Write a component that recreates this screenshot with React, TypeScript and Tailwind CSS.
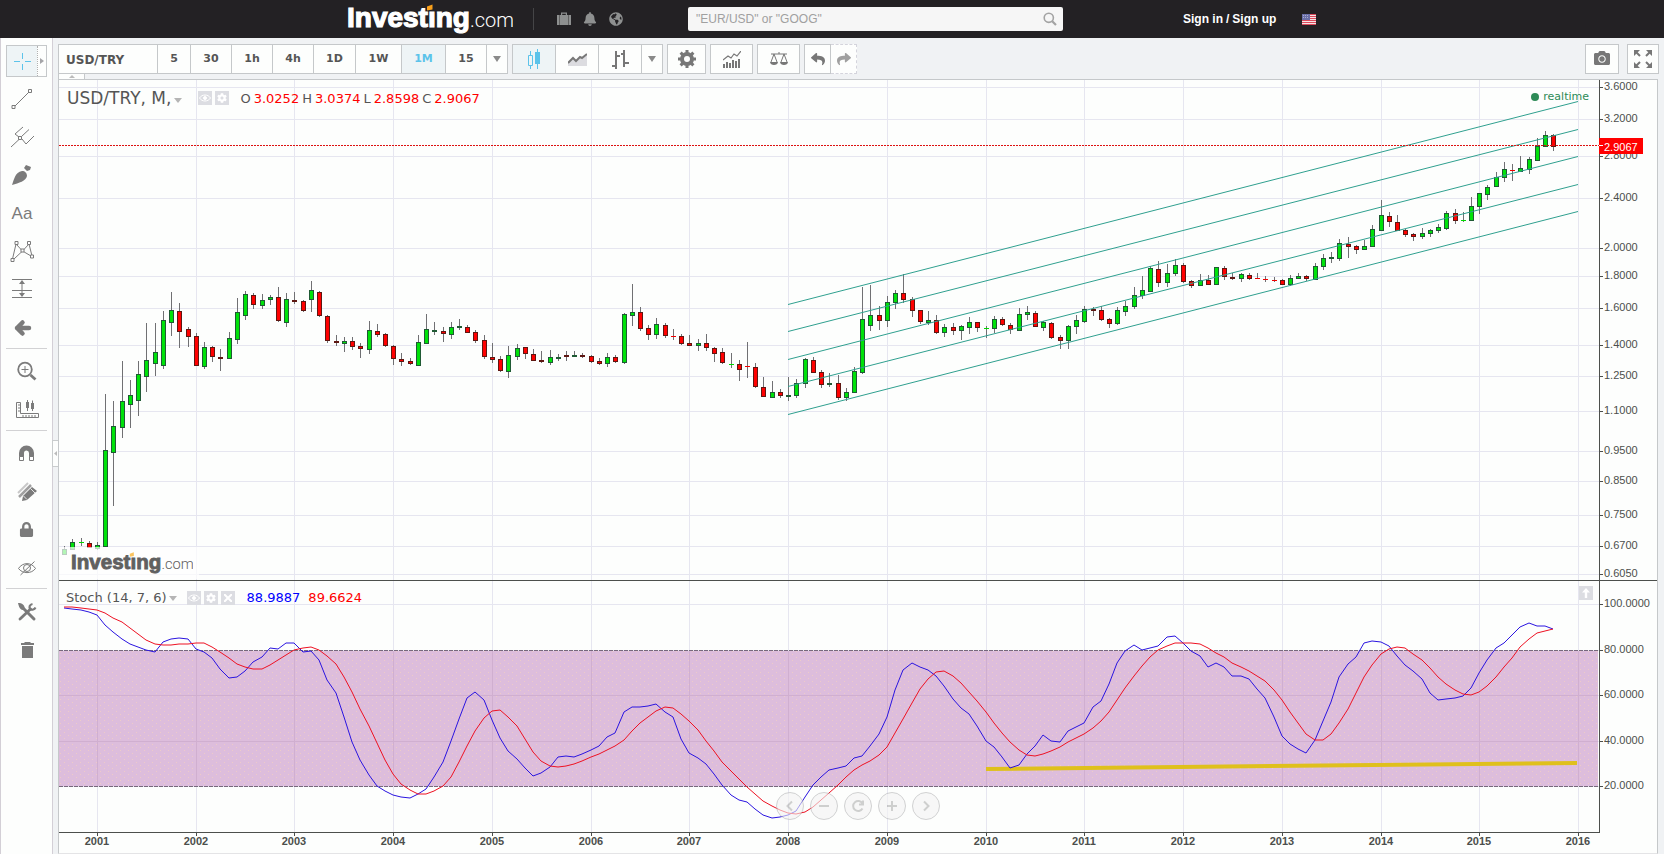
import React from 'react';
import { FaBell, FaGlobeAmericas, FaReply, FaShare, FaCamera, FaCog, FaLock } from 'react-icons/fa';
import clsx from 'clsx';

type Candle = [dir: 'g' | 'r', high: number, top: number, bottom: number, low: number];

// monthly candles, Sep 2000 - Oct 2015, in chart units
const candles: Candle[] = [
  ['g', 466, 469, 475, 475], ['g', 459, 462, 470, 470], ['g', 458, 462, 463, 466], ['r', 461, 463, 468, 468],
  // 2001
  ['g', 462, 465, 469, 470], ['g', 314, 370, 467, 467], ['g', 321, 346, 373, 426], ['g', 281, 321, 348, 358],
  ['g', 300, 315, 325, 348], ['g', 281, 294, 321, 336], ['g', 243, 280, 297, 312], ['g', 243, 272, 284, 296],
  ['g', 231, 240, 286, 289], ['g', 212, 230, 243, 256], ['r', 223, 231, 252, 268], ['r', 247, 249, 257, 267],
  // 2002
  ['r', 253, 256, 286, 286], ['g', 262, 267, 287, 289], ['r', 266, 267, 277, 282], ['r', 269, 277, 279, 291],
  ['g', 252, 258, 279, 279], ['g', 218, 232, 260, 264], ['g', 211, 214, 236, 240], ['r', 213, 215, 225, 229],
  ['g', 214, 220, 226, 229], ['g', 215, 217, 220, 225], ['r', 207, 217, 241, 242], ['g', 213, 219, 243, 247],
  // 2003
  ['r', 212, 220, 222, 224], ['r', 220, 221, 231, 232], ['g', 201, 210, 220, 232], ['r', 211, 212, 236, 237],
  ['r', 235, 236, 261, 263], ['r', 255, 261, 263, 266], ['g', 257, 261, 264, 272], ['r', 257, 261, 267, 270],
  ['r', 263, 266, 269, 278], ['g', 241, 250, 270, 274], ['r', 244, 251, 255, 257], ['r', 253, 254, 266, 267],
  // 2004
  ['r', 265, 266, 279, 285], ['r', 273, 279, 282, 286], ['r', 278, 281, 284, 285], ['g', 255, 262, 286, 286],
  ['g', 234, 249, 264, 264], ['g', 242, 250, 252, 255], ['r', 247, 251, 254, 262], ['g', 242, 247, 255, 259],
  ['g', 239, 246, 248, 250], ['r', 245, 247, 253, 253], ['r', 250, 252, 261, 263], ['r', 255, 260, 277, 279],
  // 2005
  ['r', 263, 277, 280, 283], ['r', 276, 279, 291, 292], ['g', 266, 275, 292, 298], ['g', 264, 268, 277, 280],
  ['r', 267, 267, 274, 279], ['r', 269, 274, 281, 281], ['r', 271, 280, 282, 283], ['g', 270, 277, 283, 285],
  ['g', 274, 277, 279, 281], ['r', 271, 275, 277, 281], ['g', 271, 275, 277, 277], ['r', 273, 275, 277, 278],
  // 2006
  ['r', 275, 276, 282, 283], ['r', 278, 281, 284, 285], ['g', 273, 277, 284, 287], ['r', 275, 277, 282, 283],
  ['g', 233, 234, 283, 284], ['g', 204, 232, 236, 246], ['r', 227, 232, 249, 251], ['r', 245, 248, 255, 260],
  ['g', 238, 244, 255, 259], ['r', 243, 245, 256, 258], ['r', 249, 256, 257, 260], ['r', 254, 256, 264, 265],
  // 2007
  ['r', 255, 263, 266, 266], ['g', 259, 263, 266, 271], ['r', 254, 263, 268, 271], ['r', 267, 268, 274, 282],
  ['r', 268, 272, 283, 284], ['g', 273, 284, 285, 288], ['r', 280, 284, 290, 301], ['r', 262, 286, 287, 298],
  ['r', 283, 287, 307, 308], ['r', 297, 307, 317, 317], ['g', 301, 312, 318, 318], ['r', 309, 312, 316, 318],
  // 2008
  ['g', 297, 315, 317, 321], ['g', 299, 303, 316, 318], ['g', 278, 279, 304, 308], ['r', 277, 280, 293, 293],
  ['r', 290, 292, 305, 308], ['g', 293, 303, 305, 307], ['r', 295, 303, 318, 320], ['g', 308, 312, 318, 321],
  ['g', 287, 291, 313, 313], ['g', 207, 239, 293, 294], ['g', 205, 235, 246, 251], ['r', 226, 235, 241, 250],
  // 2009
  ['g', 216, 222, 241, 247], ['g', 210, 213, 223, 229], ['r', 194, 213, 220, 223], ['r', 217, 219, 231, 237],
  ['r', 230, 230, 242, 244], ['g', 231, 240, 243, 245], ['r', 235, 240, 253, 254], ['g', 244, 247, 253, 257],
  ['r', 243, 247, 251, 255], ['g', 245, 246, 251, 260], ['g', 237, 242, 248, 254], ['r', 242, 242, 248, 252],
  // 2010
  ['g', 246, 248, 249, 258], ['g', 236, 239, 249, 253], ['r', 237, 239, 245, 246], ['r', 243, 245, 250, 254],
  ['g', 228, 234, 251, 251], ['g', 226, 232, 235, 240], ['r', 231, 233, 247, 247], ['g', 241, 242, 248, 251],
  ['r', 242, 243, 258, 259], ['r', 255, 257, 261, 269], ['g', 245, 246, 261, 269], ['g', 235, 240, 247, 254],
  // 2011
  ['g', 226, 229, 242, 243], ['r', 227, 229, 231, 236], ['r', 226, 230, 240, 241], ['r', 238, 239, 244, 248],
  ['g', 227, 230, 244, 245], ['g', 221, 226, 232, 236], ['g', 207, 215, 227, 229], ['g', 196, 210, 216, 219],
  ['g', 186, 188, 212, 212], ['r', 181, 189, 203, 207], ['g', 184, 193, 203, 207], ['g', 179, 185, 194, 196],
  // 2012
  ['r', 183, 185, 202, 203], ['r', 200, 201, 206, 208], ['g', 194, 200, 206, 206], ['r', 195, 200, 205, 205],
  ['g', 187, 187, 205, 205], ['r', 186, 188, 197, 200], ['r', 193, 197, 199, 200], ['g', 193, 194, 199, 202],
  ['r', 193, 195, 199, 200], ['r', 193, 198, 199, 199], ['r', 196, 199, 200, 202], ['r', 197, 200, 201, 202],
  // 2013
  ['r', 199, 200, 205, 205], ['g', 195, 198, 205, 206], ['g', 193, 196, 199, 199], ['r', 195, 196, 199, 201],
  ['g', 183, 186, 200, 200], ['g', 174, 178, 187, 190], ['g', 172, 177, 179, 183], ['g', 159, 163, 179, 181],
  ['r', 157, 164, 167, 178], ['r', 165, 166, 170, 174], ['g', 160, 166, 170, 170], ['g', 145, 149, 167, 167],
  // 2014
  ['g', 120, 135, 151, 151], ['r', 132, 136, 142, 147], ['r', 135, 142, 151, 151], ['r', 149, 150, 155, 157],
  ['r', 153, 154, 157, 161], ['g', 148, 153, 157, 159], ['g', 149, 150, 154, 157], ['g', 144, 147, 151, 153],
  ['g', 131, 133, 149, 150], ['r', 129, 133, 141, 144], ['g', 132, 140, 141, 142], ['g', 117, 126, 141, 141],
  // 2015
  ['g', 113, 113, 127, 134], ['g', 105, 107, 115, 120], ['g', 92, 97, 107, 107], ['g', 82, 89, 98, 102],
  ['r', 84, 90, 91, 101], ['g', 76, 88, 92, 92], ['g', 77, 79, 90, 94], ['g', 58, 66, 81, 81],
  ['g', 51, 55, 67, 67], ['r', 54, 55, 67, 71],
];

const stochK = [
  528, 529, 530, 532, 535, 545, 552, 559, 564, 567, 570, 572, 562, 559, 558, 559, 569, 572, 578, 589, 598, 597, 591, 582,
  577, 568, 569, 563, 563, 572, 571, 580, 600, 613, 637, 662, 680, 695, 706, 711, 715, 717, 718, 714, 709, 697, 682, 661,
  639, 618, 612, 620, 640, 658, 671, 679, 688, 696, 693, 687, 677, 676, 677, 674, 670, 666, 657, 653, 632, 627, 627, 626,
  624, 632, 637, 659, 673, 678, 684, 694, 705, 715, 720, 722, 729, 735, 738, 737, 735, 731, 717, 705, 697, 690, 688, 686,
  678, 676, 666, 654, 637, 610, 590, 583, 587, 590, 596, 606, 619, 628, 634, 646, 661, 667, 677, 688, 685, 674, 666, 655,
  661, 662, 651, 647, 643, 627, 621, 604, 583, 571, 565, 570, 568, 566, 557, 556, 563, 571, 576, 587, 583, 587, 596, 596,
  599, 609, 618, 637, 656, 664, 669, 673, 660, 641, 622, 597, 584, 577, 563, 561, 562, 566, 576, 585, 591, 599, 613, 620,
  619, 618, 616, 608, 593, 580, 568, 563, 555, 547, 543, 546, 546, 549,
];

const stochD = [
  527, 527, 528, 529, 530, 533, 538, 542, 548, 554, 560, 564, 565, 565, 564, 564, 563, 563, 567, 572, 578, 584, 587, 589,
  589, 585, 580, 575, 570, 568, 567, 570, 576, 584, 597, 612, 629, 646, 663, 680, 694, 704, 710, 714, 714, 711, 706, 697,
  682, 666, 651, 638, 631, 630, 637, 646, 659, 672, 681, 686, 687, 686, 684, 681, 677, 674, 670, 666, 660, 651, 643, 637,
  631, 627, 628, 634, 641, 650, 661, 671, 682, 691, 699, 707, 714, 721, 726, 730, 733, 734, 732, 727, 720, 713, 705, 697,
  690, 685, 681, 675, 667, 653, 639, 623, 609, 599, 592, 591, 596, 603, 612, 621, 632, 643, 653, 662, 670, 675, 676, 674,
  671, 667, 662, 658, 654, 648, 641, 632, 620, 608, 596, 586, 577, 570, 566, 563, 563, 563, 564, 568, 573, 577, 583, 587,
  591, 596, 601, 610, 620, 632, 643, 654, 660, 660, 654, 643, 629, 613, 597, 585, 574, 569, 567, 568, 574, 580, 588, 597,
  604, 610, 614, 615, 612, 606, 597, 587, 578, 567, 559, 553, 551, 549,
];

const priceScale: [string, number][] = [
  ['3.6000', 7], ['3.2000', 39], ['2.8000', 76], ['2.4000', 118], ['2.0000', 168], ['1.8000', 196], ['1.6000', 228],
  ['1.4000', 265], ['1.2500', 296], ['1.1000', 331], ['0.9500', 371], ['0.8500', 401], ['0.7500', 435], ['0.6700', 466],
  ['0.6050', 494],
];

const stochScale: [string, number][] = [
  ['100.0000', 524], ['80.0000', 570], ['60.0000', 615], ['40.0000', 661], ['20.0000', 706],
];

const channel: [number, number][] = [[224, 21], [251, 49], [279, 76], [306, 104], [334, 131]];

const years = Array.from({ length: 16 }, (_, i) => 2001 + i);

const monthX = (i: number) => Math.round(5.09 + i * 8.2278);
const yearX = (year: number) => monthX((year - 2001) * 12 + 4);
const toPoints = (ys: number[]) => ys.map((y, i) => `${monthX(i)},${y}`).join(' ');

function Chart() {
  return (
    <svg viewBox="0 0 1598 773" className="block w-full" role="img" aria-label="USD/TRY monthly chart">
      <defs>
        <pattern id="dots" width="8" height="6" patternUnits="userSpaceOnUse">
          <rect x="1" y="1" width="1" height="1" fill="#eecbc8" />
          <rect x="5" y="4" width="1" height="1" fill="#eecbc8" />
        </pattern>
      </defs>

      <g shapeRendering="crispEdges" stroke="#e6e6f0">
        {years.map((year) => (
          <line key={year} x1={yearX(year) + 0.5} x2={yearX(year) + 0.5} y1="0" y2="752" />
        ))}
        {[...priceScale, ...stochScale].map(([label, y]) => (
          <line key={label} x1="0" x2="1540" y1={y + 0.5} y2={y + 0.5} />
        ))}
      </g>

      <g shapeRendering="crispEdges">
        <rect x="0" y="571" width="1539" height="135" fill="#ddbddc" />
        <rect x="0" y="571" width="1539" height="135" fill="url(#dots)" />
        <g stroke="#d0afd0">
          {years.map((year) => (
            <line key={year} x1={yearX(year) + 0.5} x2={yearX(year) + 0.5} y1="571" y2="706" />
          ))}
          <line x1="0" x2="1539" y1="615.5" y2="615.5" />
          <line x1="0" x2="1539" y1="661.5" y2="661.5" />
        </g>
        <g stroke="#77687c" strokeDasharray="4 1">
          <line x1="0" x2="1539" y1="570.5" y2="570.5" />
          <line x1="0" x2="1539" y1="706.5" y2="706.5" />
        </g>
      </g>

      <g shapeRendering="crispEdges">
        {candles.map(([dir, high, top, bottom, low], i) => {
          const x = monthX(i);
          const up = dir === 'g';
          const h = bottom - top;
          return (
            <g key={i}>
              <rect x={x} y={high} width="1" height={Math.max(low - high, 1)} fill="#707073" />
              {h < 2 ? (
                <rect x={x - 2} y={top} width="5" height="1" fill={up ? '#00d800' : '#f00000'} />
              ) : (
                <>
                  <rect x={x - 2} y={top} width="5" height={h} fill={up ? '#1f5a34' : '#5e1712'} />
                  {h > 2 && (
                    <rect x={x - 1} y={top + 1} width="3" height={h - 2} fill={up ? '#00e20a' : '#ff0000'} />
                  )}
                </>
              )}
            </g>
          );
        })}
      </g>

      <g stroke="#2fa08f" strokeWidth="1">
        {channel.map(([y1, y2]) => (
          <line key={y1} x1="729" x2="1519" y1={y1 + 0.5} y2={y2 + 0.5} />
        ))}
      </g>
      <line x1="0" x2="1540" y1="65.5" y2="65.5" stroke="#dd1111" strokeDasharray="2 1" shapeRendering="crispEdges" />

      <line x1="927" x2="1518" y1="689" y2="683" stroke="#dfc01c" strokeWidth="4" />
      <polyline points={toPoints(stochK)} fill="none" stroke="#2a14e0" />
      <polyline points={toPoints(stochD)} fill="none" stroke="#ee1122" />

      <g shapeRendering="crispEdges" stroke="#4c4f4c">
        <line x1="1540.5" x2="1540.5" y1="0" y2="753" />
        <line x1="0" x2="1598" y1="500.5" y2="500.5" />
        <line x1="0" x2="1541" y1="752.5" y2="752.5" />
        {[...priceScale, ...stochScale].map(([label, y]) => (
          <line key={label} x1="1540" x2="1544" y1={y + 0.5} y2={y + 0.5} />
        ))}
        {years.map((year) => (
          <line key={year} x1={yearX(year) + 0.5} x2={yearX(year) + 0.5} y1="753" y2="756" />
        ))}
      </g>

      <g fill="#4c4f4c" className="font-['Liberation_Sans',Arial,sans-serif] text-[11px]">
        {[...priceScale, ...stochScale].map(([label, y]) => (
          <text key={label} x="1545" y={y + 3}>{label}</text>
        ))}
        <g className="font-bold" textAnchor="middle">
          {years.map((year) => (
            <text key={year} x={yearX(year)} y="765">{year}</text>
          ))}
        </g>
        <rect x="1540" y="58" width="44" height="16" fill="#ff0000" />
        <rect x="1540" y="65" width="4" height="1" fill="#ffffff" />
        <text x="1545" y="71" fill="#ffffff">2.9067</text>
      </g>
    </svg>
  );
}

function Logo({ className, dot }: { className?: string; dot: string }) {
  return (
    <svg viewBox="0 0 166 32" className={className} role="img" aria-label="Investing.com">
      <text
        x="0"
        y="24"
        fill="currentColor"
        stroke="currentColor"
        strokeWidth="1.2"
        className="font-['Liberation_Sans',Arial,sans-serif] text-[28px] font-bold"
      >
        Investıng
      </text>
      <text
        x="123"
        y="24"
        fill="currentColor"
        className="font-['Roboto','Liberation_Sans',sans-serif] text-[20px] font-light"
      >
        .com
      </text>
      <path d="M80 3.5L85.5 1.5V6.500L80 7.500Z" fill={dot} />
    </svg>
  );
}

function Header() {
  return (
    <header className="flex h-[38px] justify-center bg-[#232124] font-['Liberation_Sans',Arial,sans-serif]">
      <div className="flex w-[970px] items-center">
        <a href="#" className="text-white">
          <Logo className="h-8 w-[166px]" dot="#f9a01b" />
        </a>
        <div className="ml-5 flex items-center gap-3 border-l border-[#454547] py-1 pl-[23px] text-[#8e9090]">
          <a href="#" aria-label="Portfolio">
            <svg viewBox="0 0 14 14" className="size-[14px]" fill="currentColor">
              <path d="M4 3V0.500h6V3h4v10H0V3zM5.200 3h3.600V1.700H5.200z" />
              <path d="M2.500 3v10M11.500 3v10" stroke="#555" strokeWidth="0.8" />
            </svg>
          </a>
          <a href="#" aria-label="Alerts"><FaBell size={14} /></a>
          <a href="#" aria-label="World"><FaGlobeAmericas size={14} /></a>
        </div>
        <form className="ml-[65px] flex h-6 w-[375px] items-center rounded-xs bg-[#f6f6f6] pr-1.5 pl-2">
          <input
            type="text"
            aria-label="Search"
            placeholder={'"EUR/USD" or "GOOG"'}
            className="min-w-0 flex-1 bg-transparent text-[12px] text-gray-600 outline-none placeholder:text-[#a0a0a0]"
          />
          <button type="button" aria-label="Search">
            <svg viewBox="0 0 14 14" className="size-[14px]" fill="none" stroke="#a3a3a3">
              <circle cx="5.8" cy="5.8" r="4.600" strokeWidth="1.6" />
              <path d="M9.200 9.200L13 13" strokeWidth="2.2" />
            </svg>
          </button>
        </form>
        <div className="ml-[120px] flex gap-[3px] text-[12px] font-bold whitespace-nowrap text-white">
          <a href="#">Sign in</a>
          <span>/</span>
          <a href="#">Sign up</a>
        </div>
        <button type="button" aria-label="Language" className="mr-px ml-auto">
          <svg viewBox="0 0 14 11" className="h-[11px] w-[14px]" shapeRendering="crispEdges">
            <rect width="14" height="11" fill="#f4e4e6" />
            <path d="M0 0.500h14M0 2.500h14M0 4.500h14M0 6.500h14M0 8.500h14M0 10.500h14" stroke="#dc4a5c" />
            <rect width="8" height="6" fill="#6a6fa8" />
            <path d="M1 1.500h6M1 3.500h6" stroke="#a9acd0" strokeDasharray="1 1" />
          </svg>
        </button>
      </div>
    </header>
  );
}

function Icon({ children }: { children: React.ReactNode }) {
  return (
    <svg width="24" height="24" viewBox="0 0 24 24" fill="none" stroke="currentColor">
      {children}
    </svg>
  );
}

const drawTools = [
  {
    name: 'Trend line',
    icon: (
      <Icon>
        <path d="M5 19L19 5" />
        <path d="M2 18.500h3v3H2zM18.500 2.500h3v3h-3z" />
      </Icon>
    ),
  },
  {
    name: 'Pitchfork',
    icon: (
      <Icon>
        <path d="M1 22L9 14.500M11.500 11.500L19 4.500M5 9l8-7M5 9l4 3M12 14l4 5 8-8" />
        <path d="M8.500 11.500h3v3h-3z" />
      </Icon>
    ),
  },
  {
    name: 'Brush',
    icon: (
      <Icon>
        <path d="M2 22C4 17 5 9 12 8c3 0 5 2 5 5-1 5-8 7-15 9zM14 5l2-3 5 2-1 3-3 1z" fill="currentColor" stroke="none" />
      </Icon>
    ),
  },
  { name: 'Text', icon: <span className="pt-0.5 font-['Liberation_Sans',Arial,sans-serif] text-[17px]">Aa</span> },
  {
    name: 'Pattern',
    icon: (
      <Icon>
        <path d="M2.500 20L6 5l6.500 7L19 5l3 12M4 20l8.500-8L21 17" />
        <path
          d="M1 19.500h3v3H1zM5 2.500h3v3H5zM11 10h3v3h-3zM17.500 2.500h3v3h-3zM20.500 16h3v3h-3z"
          fill="#fff"
        />
      </Icon>
    ),
  },
  {
    name: 'Long position',
    icon: (
      <Icon>
        <path d="M2 2.500h20M2 13.500h20M2 20.500h20M12 4v15" />
        <path d="M12 3l3 4H9zM12 20l3-4H9z" fill="currentColor" stroke="none" />
      </Icon>
    ),
  },
  {
    name: 'Arrow',
    icon: (
      <Icon>
        <path d="M12.500 7.500L7 13l5.500 5.500M7 13h12" strokeWidth="4.5" strokeLinecap="round" strokeLinejoin="round" />
      </Icon>
    ),
  },
];

const zoomTools = [
  {
    name: 'Zoom in',
    icon: (
      <Icon>
        <circle cx="10" cy="10.500" r="6.800" strokeWidth="1.8" />
        <path d="M6.500 10.500h7M10 7v7" />
        <path d="M15.500 16l5 4.500" strokeWidth="2.8" />
      </Icon>
    ),
  },
  {
    name: 'Measure',
    icon: (
      <Icon>
        <path d="M1.500 5.500h4v11h18v4h-22zM3 8h2M3 11h2M3 14h2M8 18v2M11 18v2M14 18v2M17 18v2M20 18v2M12.500 3v11M17.500 3.500v10.500" />
        <path d="M11 5h3v6h-3zM16 6h3v6h-3z" fill="currentColor" stroke="none" />
      </Icon>
    ),
  },
];

const editTools = [
  {
    name: 'Magnet mode',
    icon: (
      <Icon>
        <path d="M6.500 16v-4a5 5 0 0 1 10 0v4" strokeWidth="5" />
        <path d="M4.500 15.500h4v4h-4zM14.500 15.500h4v4h-4z" fill="#fff" />
      </Icon>
    ),
  },
  {
    name: 'Stay in drawing mode',
    icon: (
      <Icon>
        <path d="M3 14L13 4" strokeWidth="2" stroke="#c8c8c8" />
        <path d="M4 18L16 6" strokeWidth="2.5" stroke="#a0a0a0" />
        <path d="M7 22l1-5 9-9 5 4-10 9z" fill="currentColor" stroke="none" />
        <path d="M15.500 9.500l4.500 4.500M8.500 17l3.500 3.500" stroke="#fff" strokeWidth="0.8" />
      </Icon>
    ),
  },
  { name: 'Lock', icon: <FaLock size={15} /> },
  {
    name: 'Hide drawings',
    icon: (
      <Icon>
        <path d="M3.500 13.500c4-6.500 13-6.500 17 0-4 5.500-13 5.500-17 0zM5.500 20L19.500 6.500" />
        <circle cx="12" cy="13" r="3.500" />
      </Icon>
    ),
  },
];

const miscTools = [
  {
    name: 'Settings',
    icon: (
      <Icon>
        <path d="M8 9l11 11" strokeWidth="3" strokeLinecap="round" />
        <path d="M3 4c4 0 7 2 6.500 5.500L8 11C5 11 4 8 3 4z" fill="currentColor" stroke="none" />
        <path d="M5 20L15.500 10" strokeWidth="2.8" strokeLinecap="round" />
        <path d="M17.500 5c-3 0.500-3.500 3-2.500 5 2 1.500 4.500 0.500 5.500-1.500" strokeWidth="2.2" />
      </Icon>
    ),
  },
  {
    name: 'Remove',
    icon: (
      <Icon>
        <path d="M7 9h11v12H7zM6 6h13v2H6zM9.500 5h6v2h-6z" fill="currentColor" stroke="none" />
      </Icon>
    ),
  },
];

function ToolGroup({ tools, className }: { tools: { name: string; icon: React.ReactNode }[]; className?: string }) {
  return (
    <div className={clsx('flex flex-col', className)}>
      {tools.map((tool) => (
        <button key={tool.name} type="button" aria-label={tool.name} className="flex h-[38px] items-center justify-center">
          {tool.icon}
        </button>
      ))}
    </div>
  );
}

function Divider() {
  return <hr className="mt-[2px] mb-[3px] border-[#d2d2d4]" />;
}

function Sidebar() {
  return (
    <aside className="relative w-[53px] shrink-0 border-x border-[#d3cfd6] bg-[#fdfefd] px-[5px] pt-[7px] text-[#7b7b7b]">
      <div className="mb-[3px] flex h-8 w-[41px] border border-[#c5c8ca]">
        <button type="button" aria-label="Crosshair" className="flex flex-1 items-center justify-center bg-[#eef4f6] text-[#5cc3ea]">
          <svg width="17" height="17" viewBox="0 0 17 17" stroke="currentColor">
            <path d="M8.500 0v6M8.500 11v6M0 8.500h6M11 8.500h6" />
          </svg>
        </button>
        <button type="button" aria-label="More cursors" className="flex w-[9px] items-center justify-center border-l border-dotted border-[#b0b0b0]">
          <svg width="4" height="6" viewBox="0 0 4 6" fill="#a5a5a8"><path d="M0 0l4 3-4 3z" /></svg>
        </button>
      </div>
      <ToolGroup tools={drawTools} className="pr-[9px]" />
      <Divider />
      <ToolGroup tools={zoomTools} />
      <Divider />
      <ToolGroup tools={editTools} />
      <Divider />
      <ToolGroup tools={miscTools} />
      <button
        type="button"
        aria-label="Collapse toolbar"
        className="absolute top-[402px] -right-1.5 flex h-[27px] w-1.5 items-center justify-center border border-r-0 border-[#c9cccd] bg-[#fdfefd]"
      >
        <svg width="3" height="5" viewBox="0 0 3 5" fill="#bbb"><path d="M3 0v5L0 2.500z" /></svg>
      </button>
    </aside>
  );
}

const intervals = [
  { label: '5', width: 'w-[33px]' },
  { label: '30', width: 'w-[41px]' },
  { label: '1h', width: 'w-[41px]' },
  { label: '4h', width: 'w-[41px]' },
  { label: '1D', width: 'w-[42px]' },
  { label: '1W', width: 'w-[46px]' },
  { label: '1M', width: 'w-[44px]' },
  { label: '15', width: 'w-[41px]' },
];

const cell = 'flex h-[30px] items-center justify-center border-y border-r border-[#c5c8ca] bg-[#fdfefd]';

function Caret() {
  return <svg width="8" height="6" viewBox="0 0 8 6" fill="#8a8a8a"><path d="M0 0h8L4 6z" /></svg>;
}

function Toolbar() {
  return (
    <div className="flex gap-1 pr-[5px] pl-[5px] text-[#777777]">
      <div className="flex font-['DejaVu_Sans',Verdana,sans-serif] text-[11px] font-bold text-[#555555]">
        <button type="button" className={clsx(cell, 'w-[100px] border-l pt-px pl-[7px] text-[12px]')}>
          <span className="flex-1 text-left">USD/TRY</span>
        </button>
        {intervals.map(({ label, width }) => (
          <button
            key={label}
            type="button"
            className={clsx(cell, width, 'pt-px', label === '1M' && 'bg-[#eef4f6]! text-[#5cc3ea]')}
          >
            {label}
          </button>
        ))}
        <button type="button" aria-label="More intervals" className={clsx(cell, 'w-[21px]')}><Caret /></button>
      </div>

      <div className="flex">
        <button type="button" aria-label="Candles" className={clsx(cell, 'w-11 border-l bg-[#eef4f6]! text-[#5cc3ea]')}>
          <svg width="14" height="20" viewBox="0 0 14 20" fill="none" stroke="currentColor">
            <path d="M1.500 6.500h4v10h-4zM3.500 2v4M3.500 17v3M10.500 0v20" />
            <path d="M8 3h5v12H8z" fill="currentColor" stroke="none" />
          </svg>
        </button>
        <button type="button" aria-label="Area" className={clsx(cell, 'w-[43px]')}>
          <svg width="19" height="13" viewBox="0 0 19 13" fill="none">
            <path d="M0 10l5-4 3 2 4-3 2 1 5-4v11H0z" fill="#dcdce0" />
            <path d="M0 10l5-5 3 3 4-4 2 1 5-4" stroke="currentColor" strokeWidth="2" />
          </svg>
        </button>
        <button type="button" aria-label="Bars" className={clsx(cell, 'w-[43px]')}>
          <svg width="17" height="19" viewBox="0 0 17 19" stroke="currentColor" strokeWidth="2">
            <path d="M4 1v18M0 16h4M4 6h4M12 0v17M9 4h3M12 13h5" />
          </svg>
        </button>
        <button type="button" aria-label="More styles" className={clsx(cell, 'w-[21px]')}><Caret /></button>
      </div>

      <button type="button" aria-label="Properties" className={clsx(cell, 'w-[39px] border-l')}>
        <svg width="18" height="18" viewBox="0 0 18 18" fill="none" stroke="currentColor">
          <circle cx="9" cy="9" r="5" strokeWidth="4" />
          <path d="M9 0v3M9 15v3M0 9h3M15 9h3M2.600 2.600l2 2M13.400 13.400l2 2M2.600 15.400l2-2M13.400 4.600l2-2" strokeWidth="3" />
        </svg>
      </button>
      <button type="button" aria-label="Indicators" className={clsx(cell, 'w-[43px] border-l')}>
        <svg width="18" height="17" viewBox="0 0 18 17" fill="none" stroke="currentColor">
          <path d="M1 17v-4M4 17v-6M7 17v-5M10 17V9M13 17v-7M16 17V8" strokeWidth="2" shapeRendering="crispEdges" />
          <path d="M0 9l5-4 3 2 3-4 3 2 4-5" strokeWidth="1.2" />
        </svg>
      </button>
      <button type="button" aria-label="Compare" className={clsx(cell, 'w-[43px] border-l')}>
        <svg width="18" height="15" viewBox="0 0 18 15" fill="none" stroke="currentColor">
          <path d="M1 2h16M9 0v2M4 2L1 10M4 2l3 8M14 2l-3 8M14 2l3 8" />
          <path d="M0 10h8c0 4-8 4-8 0zM10 10h8c0 4-8 4-8 0z" fill="currentColor" stroke="none" />
        </svg>
      </button>
      <div className="flex">
        <button type="button" aria-label="Undo" className={clsx(cell, 'w-[27px] border-l')}><FaReply size={14} /></button>
        <button type="button" aria-label="Redo" className={clsx(cell, 'w-[26px] border-dashed border-[#d4d4dc]! text-[#a0a0a0]')}>
          <FaShare size={14} />
        </button>
      </div>

      <div className="ml-auto flex gap-2">
        <button type="button" aria-label="Take a snapshot" className={clsx(cell, 'w-[34px] border-l pb-0.5')}>
          <FaCamera size={16} />
        </button>
        <button type="button" aria-label="Full screen" className={clsx(cell, 'w-8 border-l')}>
          <svg width="18" height="18" viewBox="0 0 18 18" fill="currentColor" stroke="currentColor">
            <path d="M0 0h6L0 6zM18 0h-6l6 6zM0 18h6l-6-6zM18 18h-6l6-6z" stroke="none" />
            <path d="M2 2l4 4M16 2l-4 4M2 16l4-4M16 16l-4-4" strokeWidth="2" />
          </svg>
        </button>
      </div>
    </div>
  );
}

function ChipButton({ label, children }: { label: string; children: React.ReactNode }) {
  return (
    <button type="button" aria-label={label} className="flex size-[14px] items-center justify-center bg-[#dcdde2] text-white">
      {children}
    </button>
  );
}

function EyeIcon() {
  return (
    <svg width="12" height="8" viewBox="0 0 12 8" fill="none" stroke="currentColor">
      <path d="M0.500 4c2.500-4 8.500-4 11 0-2.500 4-8.500 4-11 0z" />
      <circle cx="6" cy="4" r="1.500" fill="currentColor" />
    </svg>
  );
}

function LegendCaret() {
  return <svg width="8" height="5" viewBox="0 0 8 5" fill="#b5b5b5"><path d="M0 0h8L4 5z" /></svg>;
}

function ChartPanel() {
  const ohlc = [['O', '3.0252'], ['H', '3.0374'], ['L', '2.8598'], ['C', '2.9067']];

  return (
    <div className="relative mr-[6px] ml-[5px] border border-[#c5c8ca] border-b-[#e4e4e6] bg-[#fdfefd] font-['DejaVu_Sans',Verdana,sans-serif]">
      <Chart />

      <div className="absolute top-2 left-2 flex items-center text-[#555555]">
        <h1 className="text-[17px] leading-5">USD/TRY, M,</h1>
        <span className="ml-[3px] pt-1"><LegendCaret /></span>
        <div className="ml-4 flex gap-[3px]">
          <ChipButton label="Hide"><EyeIcon /></ChipButton>
          <ChipButton label="Format"><FaCog size={10} /></ChipButton>
        </div>
        <dl className="ml-[7px] flex gap-[3px] pt-px pl-1 text-[13px]">
          {ohlc.map(([key, value]) => (
            <div key={key} className="flex gap-[3px]">
              <dt>{key}</dt>
              <dd className="text-[#ff0000]">{value}</dd>
            </div>
          ))}
        </dl>
      </div>

      <div className="absolute top-[9px] right-[68px] flex items-center gap-1 text-[11px] leading-4 text-[#2e8b57]">
        <span className="size-2 rounded-full bg-[#2e8b57]" />
        realtime
      </div>

      <div className="absolute top-[467px] left-0 w-[140px] bg-[#fdfefd]/70 pt-1 pb-1 pl-3 text-[#606060]">
        <Logo className="h-6 w-[122px]" dot="#fbc45f" />
      </div>

      <div className="absolute top-[510px] left-[7px] flex items-center text-[13px] leading-4 text-[#555555]">
        <h2>Stoch (14, 7, 6)</h2>
        <span className="ml-[2px]"><LegendCaret /></span>
        <div className="ml-[10px] flex gap-[3px]">
          <ChipButton label="Hide"><EyeIcon /></ChipButton>
          <ChipButton label="Format"><FaCog size={10} /></ChipButton>
          <ChipButton label="Delete">
            <svg width="8" height="8" viewBox="0 0 8 8" stroke="currentColor" strokeWidth="2"><path d="M0 0l8 8M8 0L0 8" /></svg>
          </ChipButton>
        </div>
        <span className="ml-3 text-[#0000ff]">88.9887</span>
        <span className="ml-2 text-[#ff0000]">89.6624</span>
      </div>

      <div className="absolute top-[506px] right-16">
        <ChipButton label="Move pane up">
          <svg width="8" height="10" viewBox="0 0 8 10" fill="currentColor"><path d="M4 0l4 4.500H5.200V10H2.800V4.500H0z" /></svg>
        </ChipButton>
      </div>

      <div className="absolute bottom-[33px] left-1/2 flex -translate-x-1/2 gap-[6px] opacity-60">
        {[
          ['Scroll left', 'M9 2.500L4.500 7 9 11.500'],
          ['Zoom out', 'M2 7h10'],
          ['Reset', 'M11.500 4.500A5 5 0 1 0 11.500 9.500M12 1.500v4H8'],
          ['Zoom in', 'M2 7h10M7 2v10'],
          ['Scroll right', 'M5 2.500L9.500 7 5 11.500'],
        ].map(([name, d]) => (
          <button
            key={name}
            type="button"
            aria-label={name}
            className="flex size-7 items-center justify-center rounded-full border border-[#b4b4b6] bg-[#f4f4f4] text-[#b0b0b0]"
          >
            <svg width="14" height="14" viewBox="0 0 14 14" fill="none" stroke="currentColor" strokeWidth="2">
              <path d={d} />
            </svg>
          </button>
        ))}
      </div>
    </div>
  );
}

export default function App() {
  return (
    <div className="bg-[#f0f2f4]">
      <Header />
      <div className="flex">
        <Sidebar />
        <main className="min-w-0 flex-1 pt-[6px]">
          <Toolbar />
          <button
            type="button"
            aria-label="Collapse header"
            className="ml-[5px] flex h-[5px] w-[27px] items-center justify-center border-x border-[#c5c8ca] bg-[#fdfefd]"
          >
            <svg width="6" height="3" viewBox="0 0 6 3" fill="#bbb"><path d="M0 3h6L3 0z" /></svg>
          </button>
          <ChartPanel />
        </main>
      </div>
    </div>
  );
}
